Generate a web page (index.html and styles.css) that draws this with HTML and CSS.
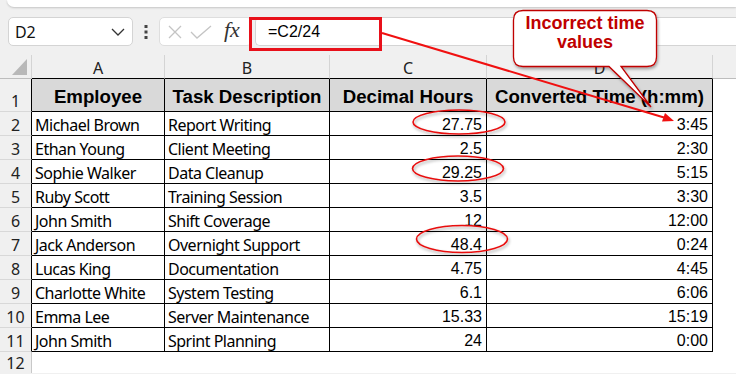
FILE: index.html
```html
<!DOCTYPE html>
<html>
<head>
<meta charset="utf-8">
<link rel="stylesheet" href="styles.css">
</head>
<body>
<div class="app">
  <div class="topstrip"></div>
  <div class="fbar">
    <div class="namebox">
      <span class="nb-text">D2</span>
      <svg class="chev" width="14" height="8" viewBox="0 0 14 8"><path d="M1 1 L7 7 L13 1" fill="none" stroke="#333" stroke-width="1.3"/></svg>
    </div>
    <svg class="dots" width="4" height="14" viewBox="0 0 4 14"><rect x="0.5" y="0" width="3" height="3" fill="#444"/><rect x="0.5" y="5.5" width="3" height="3" fill="#444"/><rect x="0.5" y="11" width="3" height="3" fill="#444"/></svg>
    <div class="fbtns">
      <svg width="14" height="14" viewBox="0 0 14 14"><path d="M1 1 L13 13 M13 1 L1 13" stroke="#c4c4c4" stroke-width="1.3" fill="none"/></svg>
      <svg width="22" height="14" viewBox="0 0 22 14"><path d="M1 7 L7 13 L21 1" stroke="#c4c4c4" stroke-width="1.3" fill="none"/></svg>
      <span class="fx">fx</span>
    </div>
    <div class="finput">=C2/24</div>
  </div>

  <div class="sheet">
    <div class="corner"><svg width="15" height="16" viewBox="0 0 15 16"><path d="M0 16 L15 16 L15 0 Z" fill="#b8b8b8"/></svg></div>
    <div class="ch">A</div><div class="ch">B</div><div class="ch">C</div><div class="ch">D</div><div class="ch ce"></div>

    <div class="rn tall">1</div>
    <div class="c hd">Employee</div><div class="c hd">Task Description</div><div class="c hd">Decimal Hours</div><div class="c hd">Converted Time (h:mm)</div><div class="e"></div>

    <div class="rn">2</div><div class="c">Michael Brown</div><div class="c">Report Writing</div><div class="c n">27.75</div><div class="c n">3:45</div><div class="e"></div>
    <div class="rn">3</div><div class="c">Ethan Young</div><div class="c">Client Meeting</div><div class="c n">2.5</div><div class="c n">2:30</div><div class="e"></div>
    <div class="rn">4</div><div class="c">Sophie Walker</div><div class="c">Data Cleanup</div><div class="c n">29.25</div><div class="c n">5:15</div><div class="e"></div>
    <div class="rn">5</div><div class="c">Ruby Scott</div><div class="c">Training Session</div><div class="c n">3.5</div><div class="c n">3:30</div><div class="e"></div>
    <div class="rn">6</div><div class="c">John Smith</div><div class="c">Shift Coverage</div><div class="c n">12</div><div class="c n">12:00</div><div class="e"></div>
    <div class="rn">7</div><div class="c">Jack Anderson</div><div class="c">Overnight Support</div><div class="c n">48.4</div><div class="c n">0:24</div><div class="e"></div>
    <div class="rn">8</div><div class="c">Lucas King</div><div class="c">Documentation</div><div class="c n">4.75</div><div class="c n">4:45</div><div class="e"></div>
    <div class="rn">9</div><div class="c">Charlotte White</div><div class="c">System Testing</div><div class="c n">6.1</div><div class="c n">6:06</div><div class="e"></div>
    <div class="rn">10</div><div class="c">Emma Lee</div><div class="c">Server Maintenance</div><div class="c n">15.33</div><div class="c n">15:19</div><div class="e"></div>
    <div class="rn">11</div><div class="c">John Smith</div><div class="c">Sprint Planning</div><div class="c n">24</div><div class="c n">0:00</div><div class="e"></div>
    <div class="rn last">12</div><div class="e"></div><div class="e"></div><div class="e"></div><div class="e"></div><div class="e"></div>
  </div>

  <svg class="annot" width="736" height="374" viewBox="0 0 736 374">
    <defs>
      <filter id="sh" x="-20%" y="-20%" width="140%" height="160%">
        <feDropShadow dx="1" dy="2" stdDeviation="1.5" flood-color="#000" flood-opacity="0.35"/>
      </filter>
    </defs>
    <rect x="250.5" y="18.5" width="130" height="31" fill="none" stroke="#e8101a" stroke-width="3"/>
    <line x1="382" y1="33" x2="664" y2="117.5" stroke="#f01010" stroke-width="2"/>
    <path d="M674 121 L662 121.5 L665 113 Z" fill="#f01010"/>
    <g filter="url(#sh)" fill="none" stroke="#e81010" stroke-width="1.6">
      <ellipse cx="459" cy="122" rx="46" ry="12"/>
      <ellipse cx="458" cy="168.5" rx="45.5" ry="12.5"/>
      <ellipse cx="462" cy="239" rx="45.5" ry="13.5"/>
    </g>
    <path filter="url(#sh)" d="M523 10.5 H647 Q656.5 10.5 656.5 20 V57 Q656.5 66.5 647 66.5 H621 L651 107 L609 66.5 H523 Q513.5 66.5 513.5 57 V20 Q513.5 10.5 523 10.5 Z" fill="#fff" stroke="#c00000" stroke-width="1.3"/>
  </svg>
  <div class="callout-text">Incorrect time<br>values</div>
</div>
</body>
</html>
```

FILE: styles.css
```css
* { box-sizing: border-box; }
html, body { margin: 0; padding: 0; }
body {
  width: 736px;
  height: 374px;
  overflow: hidden;
  background: #f0f0f0;
  font-family: "Noto Sans", sans-serif;
  color: #000;
}
.app {
  position: relative;
  width: 736px;
  height: 374px;
  overflow: hidden;
}
.topstrip {
  height: 7px;
  margin-left: 7px;
  background: #fff;
  border-radius: 0 0 0 7px;
  box-shadow: 0 1px 2px rgba(0,0,0,0.18);
}
.fbar {
  display: flex;
  align-items: center;
  height: 29px;
  margin-top: 10px;
  padding-left: 8px;
}
.namebox {
  width: 125px;
  height: 29px;
  background: #fff;
  border: 1px solid #d4d4d4;
  border-radius: 5px;
  display: flex;
  align-items: center;
  padding: 0 6px 0 6px;
  justify-content: space-between;
}
.nb-text { font-size: 16px; line-height: 20px; color: #111; letter-spacing: -0.3px; }
.chev { margin-right: 1px; }
.dots { margin-left: 11px; }
.fbtns {
  margin-left: 11px;
  width: 93px;
  height: 29px;
  background: #fff;
  border: 1px solid #dedede;
  border-radius: 5px;
  display: flex;
  align-items: center;
  padding-left: 8px;
  gap: 8px;
}
.fx {
  font-family: "Liberation Serif", serif;
  font-style: italic;
  font-size: 22px;
  line-height: 20px;
  color: #333;
  margin-left: 4px;
  margin-top: -3px;
}
.finput {
  margin-left: 3px;
  flex: 1;
  height: 29px;
  background: #fff;
  border: 1px solid #d4d4d4;
  border-right: none;
  border-radius: 5px 0 0 5px;
  font-family: "Liberation Sans", sans-serif;
  font-size: 16px;
  line-height: 27px;
  padding-left: 12px;
  color: #000;
}
.sheet {
  margin-top: 9px;
  display: grid;
  grid-template-columns: 32px 133px 165px 157px 226px 23px;
  grid-template-rows: 24px 33px repeat(10, 24px) 21px;
  background: #fff;
}
.corner {
  background: #f0f0f0;
  border-right: 1px solid #d4d4d4;
  border-bottom: 1px solid #bdbdbd;
  padding: 4px 0 0 12px;
}
.corner svg { display: block; }
.ch {
  background: #f0f0f0;
  border-right: 1px solid #d4d4d4;
  border-bottom: 1px solid #000;
  display: flex;
  justify-content: center;
  align-items: flex-end;
  font-size: 16px;
  line-height: 20px;
  color: #222;
}
.ch.ce { border-right: none; border-bottom-color: #bdbdbd; }
.rn {
  background: #f0f0f0;
  border-right: 1px solid #000;
  border-bottom: 1px solid #d8d8d8;
  display: flex;
  justify-content: center;
  align-items: flex-end;
  font-size: 16px;
  line-height: 20px;
  color: #222;
}
.rn.last { border-right-color: #c8c8c8; border-bottom: none; }
.c {
  border-right: 1px solid #000;
  border-bottom: 1px solid #000;
  display: flex;
  align-items: flex-end;
  padding: 0 3px;
  font-size: 16px;
  line-height: 20px;
  letter-spacing: -0.5px;
  white-space: nowrap;
  overflow: hidden;
}
.c.n {
  justify-content: flex-end;
  font-family: "Liberation Sans", sans-serif;
  letter-spacing: 0;
  padding-right: 4px;
}
.c.hd {
  background: #d9d9d9;
  justify-content: center;
  font-family: "Liberation Sans", sans-serif;
  font-weight: bold;
  font-size: 18.67px;
  line-height: 24px;
  letter-spacing: 0;
  padding: 0 0 2px 0;
}
.e { background: #fff; }
.annot {
  position: absolute;
  left: 0;
  top: 0;
  pointer-events: none;
}
.callout-text {
  position: absolute;
  left: 513px;
  top: 14px;
  width: 144px;
  text-align: center;
  font-family: "Liberation Sans", sans-serif;
  font-weight: bold;
  font-size: 18px;
  line-height: 19px;
  color: #c00000;
}
```
